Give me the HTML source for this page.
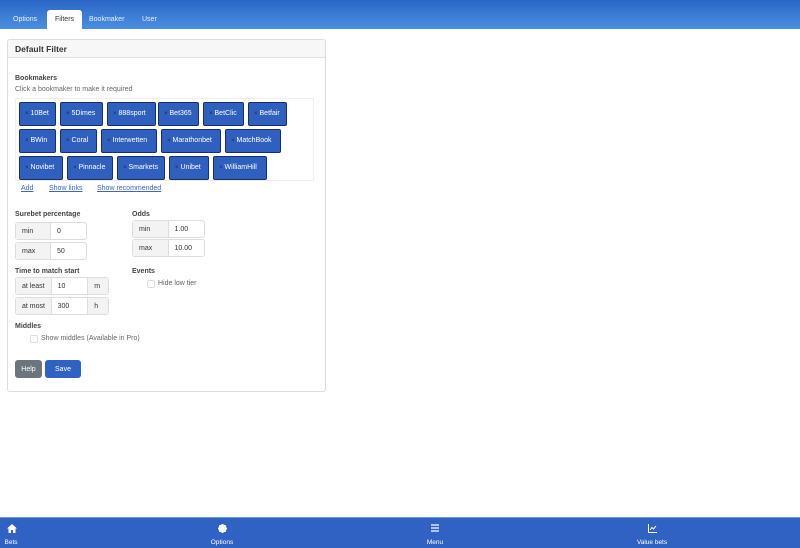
<!DOCTYPE html>
<html><head><style>
*{box-sizing:border-box;margin:0;padding:0}
body{width:800px;height:548px;position:relative;background:#fff;font-family:"Liberation Sans",sans-serif;font-size:7px;color:#333;overflow:hidden}
.a{position:absolute}
.top{left:0;top:0;width:800px;height:29px;background:linear-gradient(#2b66c6,#4a90e0)}
.tab{top:16px;color:#e8f0ff;font-size:7px}
.act{left:47px;top:10px;width:35px;height:19px;background:#fff;border-radius:3px 3px 0 0;color:#333;text-align:center;line-height:20px}
.card{left:7px;top:39px;width:319px;height:353px;border:1px solid #ddd;border-radius:3px}
.ch{left:8px;top:40px;width:317px;height:18px;background:#f7f7f7;border-bottom:1px solid #e2e2e2;border-radius:3px 3px 0 0;font-weight:bold;font-size:8.5px;padding:4px 0 0 7px;color:#333}
b{font-weight:bold;color:#444}
.bk{height:24px;background:#2f5fbf;border:1px solid #16306a;border-radius:2px;color:#fff;font-size:7px;line-height:22px;padding-left:5px}
.bk:before{content:"×";font-size:6px;margin-right:2px;color:#1a2a55}
.lnk{color:#3c66c2;font-size:7px;text-decoration:underline;top:185px}
.ig{border:1px solid #ddd;border-radius:3px;height:18px;display:flex;font-size:7px}
.ig span{background:#f3f3f3;border-right:1px solid #ddd;width:36px;padding-left:6px;line-height:17px}
.ig i{font-style:normal;padding-left:6px;line-height:17px;width:36px}
.ig em{font-style:normal;border-left:1px solid #ddd;background:#f3f3f3;width:21px;padding-left:6px;line-height:17px}
.cb{width:8px;height:8px;border:1px solid #ddd;border-radius:2px}
.bot{left:0;top:517px;width:800px;height:31px;background:#2f62c2;border-top:1px solid #6b95dc;color:#fff;font-size:6.5px}
.ni{position:absolute;top:21px;transform:translateX(-50%)}
</style></head><body>
<div class="a top"></div>
<div class="a tab" style="left:13px">Options</div>
<div class="a act">Filters</div>
<div class="a tab" style="left:89px">Bookmaker</div>
<div class="a tab" style="left:142px">User</div>
<div class="a card"></div>
<div class="a ch">Default Filter</div>
<div class="a" style="left:15px;top:75px"><b>Bookmakers</b></div>
<div class="a" style="left:15px;top:86px;color:#666">Click a bookmaker to make it required</div>
<div class="a" style="left:15px;top:98px;width:299px;height:83px;border:1px solid #eee;border-radius:2px"></div>
<div class="a bk" style="left:19px;top:102px;width:37px">10Bet</div>
<div class="a bk" style="left:60px;top:102px;width:43px">5Dimes</div>
<div class="a bk" style="left:107px;top:102px;width:49px">888sport</div>
<div class="a bk" style="left:158px;top:102px;width:41px">Bet365</div>
<div class="a bk" style="left:203px;top:102px;width:41px">BetClic</div>
<div class="a bk" style="left:248px;top:102px;width:39px">Betfair</div>
<div class="a bk" style="left:19px;top:129px;width:37px">BWin</div>
<div class="a bk" style="left:60px;top:129px;width:37px">Coral</div>
<div class="a bk" style="left:101px;top:129px;width:56px">Interwetten</div>
<div class="a bk" style="left:161px;top:129px;width:60px">Marathonbet</div>
<div class="a bk" style="left:225px;top:129px;width:56px">MatchBook</div>
<div class="a bk" style="left:19px;top:156px;width:44px">Novibet</div>
<div class="a bk" style="left:67px;top:156px;width:46px">Pinnacle</div>
<div class="a bk" style="left:117px;top:156px;width:48px">Smarkets</div>
<div class="a bk" style="left:169px;top:156px;width:40px">Unibet</div>
<div class="a bk" style="left:213px;top:156px;width:54px">WilliamHill</div>
<div class="a lnk" style="left:21px">Add</div>
<div class="a lnk" style="left:49px">Show links</div>
<div class="a lnk" style="left:97px">Show recommended</div>
<div class="a" style="left:15px;top:211px"><b>Surebet percentage</b></div>
<div class="a ig" style="left:15px;top:222px;width:72px"><span>min</span><i>0</i></div>
<div class="a ig" style="left:15px;top:242px;width:72px"><span>max</span><i>50</i></div>
<div class="a" style="left:132px;top:211px"><b>Odds</b></div>
<div class="a ig" style="left:132px;top:220px;width:73px"><span>min</span><i>1.00</i></div>
<div class="a ig" style="left:132px;top:239px;width:73px"><span>max</span><i>10.00</i></div>
<div class="a" style="left:15px;top:268px"><b>Time to match start</b></div>
<div class="a ig" style="left:15px;top:277px;width:94px"><span>at least</span><i>10</i><em>m</em></div>
<div class="a ig" style="left:15px;top:297px;width:94px"><span>at most</span><i>300</i><em>h</em></div>
<div class="a" style="left:132px;top:268px"><b>Events</b></div>
<div class="a cb" style="left:147px;top:280px"></div>
<div class="a" style="left:158px;top:280px;color:#666">Hide low tier</div>
<div class="a" style="left:15px;top:323px"><b>Middles</b></div>
<div class="a cb" style="left:30px;top:335px"></div>
<div class="a" style="left:41px;top:335px;color:#666">Show middles (Available in Pro)</div>
<div class="a" style="left:15px;top:360px;width:27px;height:18px;background:#6c757d;border-radius:3px;color:#fff;line-height:19px;text-align:center">Help</div>
<div class="a" style="left:45px;top:360px;width:36px;height:18px;background:#2f62c2;border-radius:3px;color:#fff;line-height:19px;text-align:center">Save</div>
<div class="a bot">
<svg class="a" style="left:7px;top:6px" width="10" height="9" viewBox="0 0 10 9"><path d="M5 0L0 4.5h1.5V9h2.5V6h2v3h2.5V4.5H10z" fill="#fff"/></svg>
<div class="ni" style="left:11px">Bets</div>
<svg class="a" style="left:218px;top:6px" width="9" height="9" viewBox="0 0 10 10"><circle cx="5" cy="5" r="3.5" fill="none" stroke="#fff" stroke-width="2.2"/><path d="M5 0v10M0 5h10M1.5 1.5l7 7M8.5 1.5l-7 7" stroke="#fff" stroke-width="1.4"/></svg>
<div class="ni" style="left:222px">Options</div>
<svg class="a" style="left:431px;top:6px" width="8" height="8" viewBox="0 0 8 8"><path d="M0 1h8M0 4h8M0 7h8" stroke="#fff" stroke-width="1.2"/></svg>
<div class="ni" style="left:435px">Menu</div>
<svg class="a" style="left:648px;top:6px" width="9" height="9" viewBox="0 0 9 9"><path d="M.5 0v8.5H9M2 6l2-2.5 1.5 1.5L8 2" stroke="#fff" stroke-width="1" fill="none"/></svg>
<div class="ni" style="left:652px">Value bets</div>
</div>
</body></html>
